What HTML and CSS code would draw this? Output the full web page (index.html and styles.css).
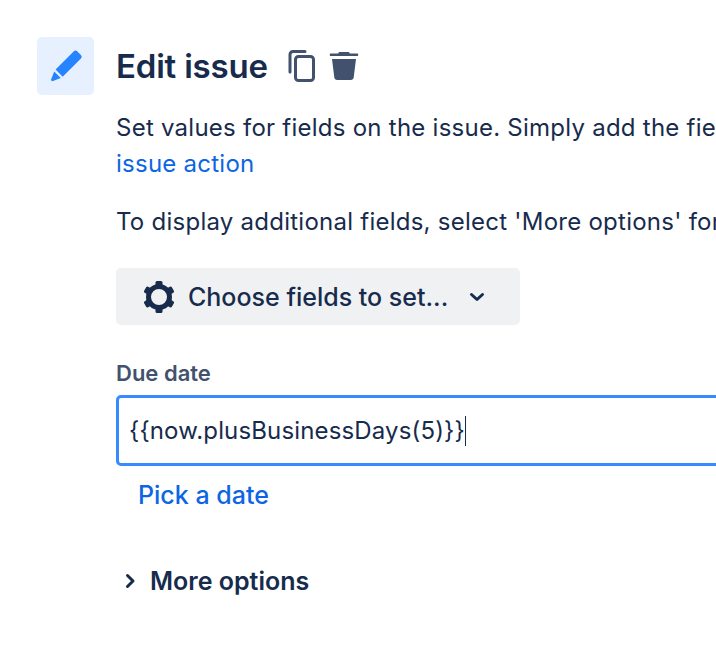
FILE: index.html
```html
<!DOCTYPE html>
<html lang="en">
  <head>
    <meta charset="UTF-8" />
    <title>Edit issue</title>
    <link rel="stylesheet" href="styles.css">
  </head>
  <body>
    <div class="panel">
      <div class="tile">
        <svg width="38" height="38" viewBox="0 0 32 32"><path fill="#2684ff" d="M22.600 3.600a2 2 0 0 1 2.800 0l3.200 3.200a2 2 0 0 1 0 2.800L13.200 25 7.200 19zM6.100 20.600l5.500 5.500-6.500 2.600c-1.100.3-2-.6-1.600-1.600z"/></svg>
      </div>
      <div class="content">
        <div class="title-row">
          <h2>Edit issue</h2>
          <svg class="copy-icon" width="30" height="34" viewBox="0 0 30 34"><path fill="none" stroke="#42526e" stroke-width="3" stroke-linecap="round" d="M18 2.500H6a3 3 0 0 0-3 3V23"/><rect x="8.500" y="7.500" width="18" height="24" rx="3" fill="none" stroke="#42526e" stroke-width="3"/></svg>
          <svg class="trash-icon" width="30" height="30" viewBox="0 0 30 30"><path fill="#42526e" d="M11 1h8c1 0 1.500.5 1.800 1.500H28c.8 0 1.300.5 1.300 1.200S28.800 5 28 5H2c-.8 0-1.300-.5-1.300-1.300S1.200 2.500 2 2.500h7.200C9.500 1.500 10 1 11 1zM3 8h24l-2.300 18.500c-.2 1.600-1.300 2.500-2.800 2.500H8.100c-1.500 0-2.600-.9-2.800-2.500z"/></svg>
        </div>
        <p class="desc">Set values for fields on the issue. Simply add the fields<br><a href="#">issue action</a></p>
        <p class="desc more">To display additional fields, select 'More options' for</p>
        <button class="choose-btn" type="button">
          <svg width="34" height="34" viewBox="0 0 34 34"><circle cx="17" cy="17" r="10.500" fill="none" stroke="#172b4d" stroke-width="5"/><g fill="#172b4d"><rect x="13.500" y="1" width="7" height="6" rx="1.500"/><rect x="13.500" y="27" width="7" height="6" rx="1.500"/><rect x="13.500" y="1" width="7" height="6" rx="1.500" transform="rotate(60 17 17)"/><rect x="13.500" y="1" width="7" height="6" rx="1.500" transform="rotate(120 17 17)"/><rect x="13.500" y="1" width="7" height="6" rx="1.500" transform="rotate(240 17 17)"/><rect x="13.500" y="1" width="7" height="6" rx="1.500" transform="rotate(300 17 17)"/></g></svg>
          <span class="choose-label">Choose fields to set...</span>
          <svg class="chevron" width="16" height="16" viewBox="0 0 16 16"><path fill="none" stroke="#172b4d" stroke-width="3" stroke-linecap="round" stroke-linejoin="round" d="M2.500 5.500 8 10.500l5.500-5"/></svg>
        </button>
        <label class="field-label" for="due_date">Due date</label>
        <div class="field-box">
          <span id="due_date" class="field-value">{{now.plusBusinessDays(5)}}</span>
        </div>
        <a class="pick-link" href="#">Pick a date</a>
        <div class="more-options">
          <svg width="14" height="16" viewBox="0 0 14 16"><path fill="none" stroke="#172b4d" stroke-width="3" stroke-linecap="round" stroke-linejoin="round" d="M4.500 2.500 10 8l-5.500 5.500"/></svg>
          <span>More options</span>
        </div>
      </div>
    </div>
  </body>
</html>
```

FILE: styles.css
```css
html,
body {
  margin: 0;
  padding: 0;
  height: 658px;
  overflow: hidden;
  background-color: #fff;
}

body {
  font-family: "Inter", "Liberation Sans", sans-serif;
  color: #172b4d;
}

.panel {
  display: flex;
  gap: 22px;
  padding: 37px 0 0 37px;
}

.tile {
  flex: none;
  display: flex;
  align-items: center;
  justify-content: center;
  width: 57px;
  height: 58px;
  background-color: #e6f0ff;
  border-radius: 5px;
}

.content {
  flex: none;
  width: 620px;
}

.title-row {
  display: flex;
  align-items: center;
  height: 58px;
}

h2 {
  margin: 0 19px 0 0;
  font-size: 33px;
  font-weight: 600;
  letter-spacing: -0.2px;
  color: #172b4d;
}

.trash-icon {
  margin-left: 12px;
}

.desc {
  margin: 15px 0 0;
  font-size: 24px;
  letter-spacing: 0.25px;
  line-height: 36px;
  white-space: nowrap;
  color: #172b4d;
}

.desc.more {
  margin-top: 22px;
}

a {
  color: #0c66e4;
  text-decoration: none;
}

.choose-btn {
  display: flex;
  align-items: center;
  width: 404px;
  height: 57px;
  margin-top: 28px;
  padding: 0 0 0 26px;
  border: none;
  border-radius: 5px;
  background-color: #f0f1f3;
  color: #172b4d;
  font-family: inherit;
  font-size: 25px;
  font-weight: 500;
}

.choose-label {
  margin-left: 12px;
}

.chevron {
  margin-left: 21px;
}

.field-label {
  display: block;
  margin-top: 36px;
  font-size: 22px;
  font-weight: 600;
  line-height: 24px;
  color: #42526e;
}

.field-box {
  display: flex;
  align-items: center;
  box-sizing: border-box;
  height: 71px;
  margin-top: 10px;
  padding-left: 10px;
  border: 3px solid #388bff;
  border-radius: 5px;
}

.field-value {
  border-right: 1px solid #172b4d;
  font-size: 24px;
  letter-spacing: 0.15px;
  line-height: 30px;
}

.pick-link {
  display: block;
  margin: 13px 0 0 22px;
  font-size: 25px;
  font-weight: 500;
  line-height: 32px;
}

.more-options {
  display: flex;
  align-items: center;
  gap: 13px;
  margin: 54px 0 0 7px;
  font-size: 25px;
  font-weight: 600;
  line-height: 32px;
}
```
